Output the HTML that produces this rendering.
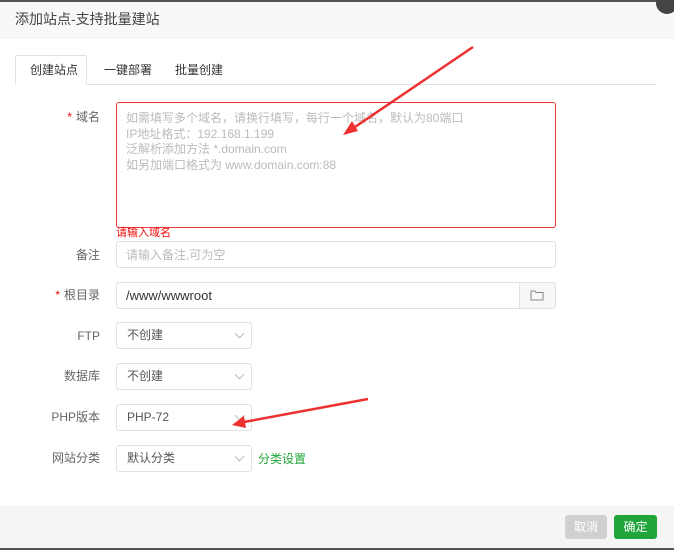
<!DOCTYPE html>
<html><head><meta charset="utf-8"><style>
*{box-sizing:border-box;margin:0;padding:0}
body{width:674px;height:550px;overflow:hidden;background:#fff;font-family:"Liberation Sans","Noto Sans CJK SC",sans-serif;font-size:12px;line-height:1.2;color:#555;position:relative}
.a{position:absolute}
.hdr{left:0;top:2px;width:674px;height:36px;background:#f8f8f8;border-bottom:1px solid #eee}
.lab{width:100px;text-align:right;left:0;color:#666}
.star{color:#ef0808;margin-right:4px}
.inp{border:1px solid #e2e2e2;border-radius:3px;background:#fff}
.sel{left:116px;width:136px;height:27px;border:1px solid #e2e2e2;border-radius:3px;padding:5px 0 0 10px;color:#555}
.sel:after{content:"";position:absolute;right:8px;top:7px;width:6px;height:6px;border-right:1px solid #bbb;border-bottom:1px solid #bbb;transform:rotate(45deg)}
</style></head><body>
<div class="a" style="left:0;top:0;width:674px;height:2px;background:#555"></div>
<div class="a hdr"></div>
<div class="a" style="left:15px;top:11px;font-size:14px;color:#444">添加站点-支持批量建站</div>
<div class="a" style="left:656px;top:-8px;width:22px;height:22px;border-radius:50%;background:#444"></div>
<div class="a" style="left:15px;top:84px;width:642px;height:1px;background:#e2e2e2"></div>
<div class="a" style="left:15px;top:55px;width:72px;height:30px;border:1px solid #e2e2e2;border-bottom:1px solid #fff;background:#fff;border-radius:2px 2px 0 0"></div>
<div class="a" style="left:30px;top:63px;color:#333">创建站点</div>
<div class="a" style="left:104px;top:63px;color:#333">一键部署</div>
<div class="a" style="left:175px;top:63px;color:#333">批量创建</div>

<div class="a lab" style="top:110px"><span class="star">*</span>域名</div>
<div class="a" style="left:116px;top:102px;width:440px;height:126px;border:1px solid #ef0808;border-radius:3px;opacity:.8"></div>
<div class="a" style="left:126px;top:111px;line-height:15.5px;color:#bbb">如需填写多个域名，请换行填写，每行一个域名，默认为80端口<br>IP地址格式：192.168.1.199<br>泛解析添加方法 *.domain.com<br>如另加端口格式为 www.domain.com:88</div>
<div class="a" style="left:116px;top:227px;font-size:11px;color:#ef0808">请输入域名</div>

<div class="a lab" style="top:248px">备注</div>
<div class="a inp" style="left:116px;top:241px;width:440px;height:27px"></div>
<div class="a" style="left:126px;top:248px;color:#bbb">请输入备注,可为空</div>

<div class="a lab" style="top:288px"><span class="star">*</span>根目录</div>
<div class="a inp" style="left:116px;top:282px;width:440px;height:27px"></div>
<div class="a" style="left:519px;top:283px;width:36px;height:25px;background:#f6f7f9;border-left:1px solid #e2e2e2"></div>
<svg class="a" style="left:530px;top:289px" width="14" height="12" viewBox="0 0 14 12"><path d="M1 2h4l1 1.5h7V11H1z" fill="none" stroke="#888"/></svg>
<div class="a" style="left:126px;top:288px;color:#333;font-size:13px">/www/wwwroot</div>

<div class="a lab" style="top:329px">FTP</div><div class="a sel" style="top:322px">不创建</div>
<div class="a lab" style="top:369px">数据库</div><div class="a sel" style="top:363px">不创建</div>
<div class="a lab" style="top:410px">PHP版本</div><div class="a sel" style="top:404px">PHP-72</div>
<div class="a lab" style="top:451px">网站分类</div><div class="a sel" style="top:445px">默认分类</div>
<div class="a" style="left:258px;top:452px;color:#20a53a">分类设置</div>

<div class="a" style="left:0;top:506px;width:674px;height:42px;background:#f5f5f5;border-top:1px solid #eee"></div>
<div class="a" style="left:0;top:548px;width:674px;height:2px;background:#555"></div>
<div class="a" style="left:565px;top:515px;width:42px;height:24px;background:#d0d0d0;border-radius:3px;color:#fff;text-align:center;line-height:24px">取消</div>
<div class="a" style="left:614px;top:515px;width:43px;height:24px;background:#20a53a;border-radius:3px;color:#fff;text-align:center;line-height:24px">确定</div>

<svg class="a" style="left:0;top:0" width="674" height="550">
<line x1="473" y1="47" x2="352" y2="129" stroke="#ef3030" stroke-width="2.5"/>
<polygon points="343,135 352,121 358,131" fill="#ef3030"/>
<line x1="368" y1="399" x2="244" y2="422" stroke="#ef3030" stroke-width="2.5"/>
<polygon points="232,425 244,416 246,428" fill="#ef3030"/>
</svg>
</body></html>
